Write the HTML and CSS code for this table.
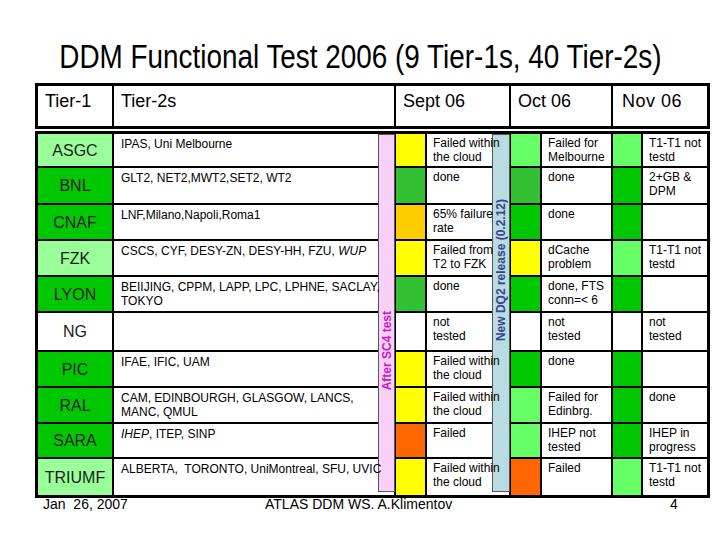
FILE: index.html
```html
<!DOCTYPE html>
<html>
<head>
<meta charset="utf-8">
<link rel="stylesheet" href="styles.css">
</head>
<body>
<div class="title"><span class="title-text">DDM Functional Test 2006 (9 Tier-1s, 40 Tier-2s)</span></div>

<div class="thead">
  <div class="th">Tier-1</div>
  <div class="th">Tier-2s</div>
  <div class="th">Sept 06</div>
  <div class="th">Oct 06</div>
  <div class="th nov">Nov 06</div>
</div>

<div class="tbody">
  <div class="band pink"><span class="vtext pinktext">After SC4 test</span></div>
  <div class="band blue"><span class="vtext bluetext">New DQ2 release (0.2.12)</span></div>

  <div class="t1 light">ASGC</div>
  <div class="t2"><span class="tx">IPAS, Uni Melbourne</span></div>
  <div class="sw yellow"></div>
  <div class="st"><span class="tx">Failed within<br>the cloud</span></div>
  <div class="sw lime"></div>
  <div class="st"><span class="tx">Failed for<br>Melbourne</span></div>
  <div class="sw lime"></div>
  <div class="st"><span class="tx">T1-T1 not<br>testd</span></div>

  <div class="t1 dark">BNL</div>
  <div class="t2"><span class="tx">GLT2, NET2,MWT2,SET2, WT2</span></div>
  <div class="sw mid"></div>
  <div class="st"><span class="tx">done</span></div>
  <div class="sw mid"></div>
  <div class="st"><span class="tx">done</span></div>
  <div class="sw green"></div>
  <div class="st"><span class="tx">2+GB &amp;<br>DPM</span></div>

  <div class="t1 dark">CNAF</div>
  <div class="t2"><span class="tx">LNF,Milano,Napoli,Roma1</span></div>
  <div class="sw amber"></div>
  <div class="st"><span class="tx">65% failure<br>rate</span></div>
  <div class="sw green"></div>
  <div class="st"><span class="tx">done</span></div>
  <div class="sw green"></div>
  <div class="st"></div>

  <div class="t1 light">FZK</div>
  <div class="t2"><span class="tx">CSCS, CYF, DESY-ZN, DESY-HH, FZU, <i>WUP</i></span></div>
  <div class="sw yellow"></div>
  <div class="st"><span class="tx">Failed from<br>T2 to FZK</span></div>
  <div class="sw yellow"></div>
  <div class="st"><span class="tx">dCache<br>problem</span></div>
  <div class="sw lime"></div>
  <div class="st"><span class="tx">T1-T1 not<br>testd</span></div>

  <div class="t1 dark">LYON</div>
  <div class="t2"><span class="tx">BEIIJING, CPPM, LAPP, LPC, LPHNE, SACLAY,<br>TOKYO</span></div>
  <div class="sw mid"></div>
  <div class="st"><span class="tx">done</span></div>
  <div class="sw green"></div>
  <div class="st"><span class="tx">done, FTS<br>conn=&lt; 6</span></div>
  <div class="sw green"></div>
  <div class="st"></div>

  <div class="t1">NG</div>
  <div class="t2"></div>
  <div class="sw"></div>
  <div class="st"><span class="tx">not<br>tested</span></div>
  <div class="sw"></div>
  <div class="st"><span class="tx">not<br>tested</span></div>
  <div class="sw"></div>
  <div class="st"><span class="tx">not<br>tested</span></div>

  <div class="t1 dark">PIC</div>
  <div class="t2"><span class="tx">IFAE, IFIC, UAM</span></div>
  <div class="sw yellow"></div>
  <div class="st"><span class="tx">Failed within<br>the cloud</span></div>
  <div class="sw green"></div>
  <div class="st"><span class="tx">done</span></div>
  <div class="sw green"></div>
  <div class="st"></div>

  <div class="t1 dark">RAL</div>
  <div class="t2"><span class="tx">CAM, EDINBOURGH, GLASGOW, LANCS,<br>MANC, QMUL</span></div>
  <div class="sw yellow"></div>
  <div class="st"><span class="tx">Failed within<br>the cloud</span></div>
  <div class="sw lime"></div>
  <div class="st"><span class="tx">Failed for<br>Edinbrg.</span></div>
  <div class="sw green"></div>
  <div class="st"><span class="tx">done</span></div>

  <div class="t1 dark">SARA</div>
  <div class="t2"><span class="tx"><i>IHEP</i>, ITEP, SINP</span></div>
  <div class="sw red"></div>
  <div class="st"><span class="tx">Failed</span></div>
  <div class="sw lime"></div>
  <div class="st"><span class="tx">IHEP not<br>tested</span></div>
  <div class="sw green"></div>
  <div class="st"><span class="tx">IHEP in<br>progress</span></div>

  <div class="t1 light">TRIUMF</div>
  <div class="t2"><span class="tx">ALBERTA,&nbsp; TORONTO, UniMontreal, SFU, UVIC</span></div>
  <div class="sw yellow"></div>
  <div class="st"><span class="tx">Failed within<br>the cloud</span></div>
  <div class="sw red"></div>
  <div class="st"><span class="tx">Failed</span></div>
  <div class="sw lime"></div>
  <div class="st"><span class="tx">T1-T1 not<br>testd</span></div>
</div>

<div class="footer">
  <span class="f-date">Jan&nbsp; 26, 2007</span>
  <span class="f-mid">ATLAS DDM WS. A.Klimentov</span>
  <span class="f-page">4</span>
</div>
</body>
</html>
```

FILE: styles.css
```css
* { box-sizing: border-box; }

html, body {
  margin: 0;
  padding: 0;
  background: #ffffff;
}

body {
  width: 720px;
  height: 540px;
  overflow: hidden;
  font-family: "Liberation Sans", Arial, sans-serif;
  color: #000;
}

.title {
  height: 83px;
  padding-top: 39px;
  text-align: center;
  font-size: 33px;
  line-height: 36px;
  white-space: nowrap;
}

.title-text {
  display: inline-block;
  transform: scaleX(0.845);
  transform-origin: center;
}

.thead {
  margin-left: 35px;
  width: 675px;
  display: grid;
  grid-template-columns: 74px 280px 113px 100px 94px;
  grid-template-rows: 40px;
  gap: 2px;
  background: #000;
  border: 3px solid #000;
}

.th {
  background: #fff;
  font-size: 18px;
  line-height: 20px;
  padding: 5px 0 0 7px;
}

.th.nov {
  padding-left: 9px;
  letter-spacing: 0.5px;
}

.tbody {
  position: relative;
  margin-top: 2px;
  margin-left: 35px;
  width: 675px;
  display: grid;
  grid-template-columns: 74px 280px 29px 82px 29px 69px 28px 64px;
  grid-template-rows: 32px 35px 34px 34px 34px 37px 34px 34px 33px 36px;
  gap: 2px;
  background: #000;
  border: 3px solid #000;
}

.t1 {
  background: #fff;
  display: flex;
  align-items: center;
  justify-content: center;
  font-size: 16px;
  padding-top: 1px;
  color: #1c1c1c;
}

.t1.light { background: #99ff99; }
.t1.dark { background: #00c800; }

.t2 {
  background: #fff;
  font-size: 12px;
  line-height: 14px;
  padding: 3px 0 0 7px;
  white-space: nowrap;
}

.st {
  background: #fff;
  font-size: 12px;
  line-height: 14px;
  padding: 2px 0 0 6px;
  white-space: nowrap;
}

.tx {
  position: relative;
  z-index: 2;
}

.sw { background: #fff; }
.sw.yellow { background: #ffff00; }
.sw.mid { background: #33c033; }
.sw.green { background: #00c800; }
.sw.lime { background: #66ff66; }
.sw.amber { background: #ffcc00; }
.sw.red { background: #ff6600; }

.band {
  position: absolute;
  top: 0;
  height: 358px;
  z-index: 1;
  border: 1px solid #555;
  display: flex;
  flex-direction: column;
  align-items: center;
}

.band.pink {
  left: 340px;
  width: 17px;
  background: #f9d0f7;
  padding-top: 176px;
}

.band.blue {
  left: 454px;
  width: 18px;
  background: #b9dce2;
  padding-top: 64px;
}

.vtext {
  writing-mode: vertical-rl;
  transform: rotate(180deg);
  font-size: 12px;
  font-weight: bold;
  line-height: 14px;
  white-space: nowrap;
}

.pinktext { color: #c020c0; }
.bluetext { color: #34448f; }

.footer {
  display: flex;
  margin-top: -1px;
  font-size: 14px;
  line-height: 14px;
  white-space: nowrap;
}

.f-date {
  margin-left: 43px;
  width: 222px;
}

.f-mid {
  width: 405px;
}
```
